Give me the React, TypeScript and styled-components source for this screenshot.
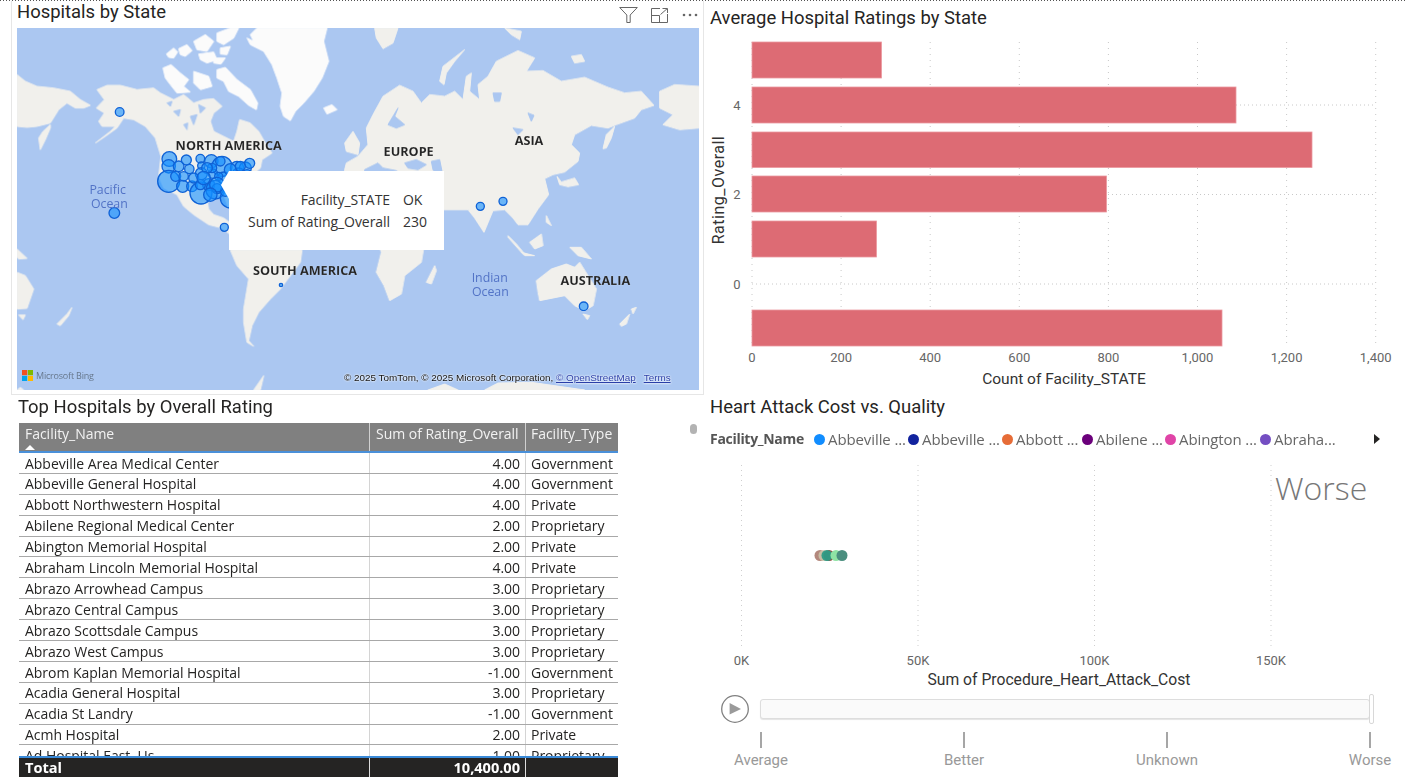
import React from "react";
import styled, { createGlobalStyle } from "styled-components";

const Global = createGlobalStyle`
  html, body { margin: 0; padding: 0; background: #fff; overflow: hidden; }
  * { box-sizing: border-box; }
`;

const DIN = `Roboto, "Liberation Sans", sans-serif`;
const SEGOE = `"Open Sans", "Noto Sans", sans-serif`;

const Page = styled.div`
  width: 1406px;
  height: 780px;
  display: grid;
  grid-template-columns: 704px 702px;
  grid-template-rows: 1px 394px 385px;
  overflow: hidden;
  font-family: ${SEGOE};
  color: #252423;
`;
const TopEdge = styled.div`
  grid-column: 1 / 3;
  background: repeating-linear-gradient(90deg, #555 0 1px, transparent 1px 3px);
`;
const MapVisual = styled.section`
  margin-left: 11px;
  border: 1px solid #e6e6e6;
  border-top: none;
  padding: 0 3px 0 5px;
  display: flex;
  flex-direction: column;
`;
const VisualHeader = styled.header`
  height: 27px;
  display: flex;
  align-items: center;
  justify-content: space-between;
`;
const Title = styled.h2`
  margin: 0;
  font: 400 18.45px/24px ${DIN};
  color: #252423;
  white-space: nowrap;
`;
const MapTitle = styled(Title)`
  margin-top: -5px;
`;
const HeaderIcons = styled.div`
  display: flex;
  align-items: center;
  gap: 14px;
  padding-right: 2px;
  margin-top: 1px;
  & > svg:first-child { margin-right: -1px; }
`;
const MapFrame = styled.div`
  position: relative;
  width: 682px;
  height: 362px;
  background: #abc7f1;
  overflow: hidden;
`;
const MapSvg = styled.svg`
  display: block;
  width: 682px;
  height: 362px;
`;
const LandGroup = styled.g`
  filter: blur(1.8px);
`;
const Tooltip = styled.div`
  position: absolute;
  left: 212px;
  top: 143px;
  width: 215px;
  height: 79px;
  background: #fff;
  padding: 18px 0 0 18px;
  display: grid;
  grid-template-columns: 143px auto;
  grid-auto-rows: 22px;
  column-gap: 13px;
  font: 400 14px/22px ${SEGOE};
  letter-spacing: -0.06px;
  color: #333;
  &::before {
    content: "";
    position: absolute;
    left: -8px;
    top: 0;
    border-style: solid;
    border-width: 14px 8px 14px 0;
    border-color: transparent #fff transparent transparent;
  }
`;
const TipKey = styled.span`
  text-align: right;
  white-space: nowrap;
`;
const TipValue = styled.span`
  white-space: nowrap;
`;
const BingMark = styled.div`
  position: absolute;
  left: 5px;
  bottom: 9px;
  display: flex;
  align-items: center;
  gap: 3px;
  font: 400 9px/11px ${SEGOE};
  letter-spacing: -0.2px;
  color: #66778c;
`;
const Attribution = styled.div`
  position: absolute;
  left: 327px;
  bottom: 6px;
  font: 400 9.9px/12px "Liberation Sans", sans-serif;
  color: #111;
  white-space: nowrap;
  text-shadow: 0 0 2px #fff, 0 0 2px #fff;
`;
const AttrLink = styled.span<{ $gap?: boolean }>`
  color: #2a3fa8;
  text-decoration: underline;
  margin-left: ${(p) => (p.$gap ? "8px" : "0")};
`;
const BarVisual = styled.section`
  padding: 5px 0 0 6px;
  display: flex;
  flex-direction: column;
`;
const ChartSvg = styled.svg`
  display: block;
  margin-left: -6px;
  flex: none;
`;
const ScatterSvg = styled(ChartSvg)`
  margin-top: 10px;
`;
const TableVisual = styled.section`
  position: relative;
  padding-left: 18px;
  padding-top: 1px;
`;
const TableTitle = styled(Title)`
  height: 27px;
  line-height: 23px;
`;
const ScrollDot = styled.div`
  position: absolute;
  left: 690px;
  top: 29px;
  width: 7px;
  height: 10px;
  border-radius: 4px;
  background: #b3b3b3;
`;
const Table = styled.div`
  width: 599px;
  margin-left: 1px;
  font: 400 14px/20px ${SEGOE};
  letter-spacing: -0.03px;
`;
const Columns = styled.div`
  display: grid;
  grid-template-columns: 351px 156px 92px;
`;
const HeadRow = styled(Columns)`
  height: 30px;
  background: #808080;
  color: #f2f2f2;
  border-bottom: 2px solid #4a90d9;
`;
const HeadCell = styled.div`
  position: relative;
  padding: 0 5px 0 6px;
  white-space: nowrap;
  line-height: 22px;
  border-right: 1px solid #d0d0d0;
  &:last-child { border-right: none; padding-left: 5px; }
`;
const SortArrow = styled.span`
  position: absolute;
  left: 6px;
  top: 22px;
  border-style: solid;
  border-width: 0 5px 5px 5px;
  border-color: transparent transparent #fff transparent;
`;
const Body = styled.div`
  height: 303px;
  overflow: hidden;
`;
const Row = styled(Columns)`
  height: 20.9px;
  border-bottom: 1px solid #a8a8a8;
`;
const Cell = styled.div<{ $num?: boolean }>`
  padding: 0.6px 5px 0 6px;
  white-space: nowrap;
  overflow: hidden;
  text-align: ${(p) => (p.$num ? "right" : "left")};
  line-height: 20px;
  border-right: 1px solid #d4d4d4;
  &:last-child { border-right: none; padding-left: 5px; }
`;
const TotalRow = styled(Columns)`
  height: 21px;
  background: #252423;
  color: #fff;
  font-weight: 700;
  font-size: 14.6px;
  border-top: 2px solid #3a8ad8;
`;
const TotalCell = styled(Cell)`
  padding-top: 0;
  border-right-color: #ddd;
  line-height: 19px;
`;
const ScatterVisual = styled.section`
  padding: 0 0 0 6px;
  display: flex;
  flex-direction: column;
`;
const ScatterTitle = styled(Title)`
  height: 24px;
`;
const Legend = styled.div`
  height: 22px;
  margin-top: 9px;
  display: flex;
  align-items: center;
  position: relative;
  font: 400 15px/22px ${SEGOE};
  letter-spacing: -0.1px;
  color: #666;
`;
const LegendName = styled.span`
  width: 104px;
  font-size: 14px;
  letter-spacing: -0.3px;
  font-weight: 700;
  color: #555;
  white-space: nowrap;
`;
const LegendItem = styled.span<{ $width: number }>`
  width: ${(p) => p.$width}px;
  display: flex;
  align-items: center;
  gap: 3px;
  white-space: nowrap;
`;
const LegendDot = styled.i<{ $color: string }>`
  width: 11px;
  height: 11px;
  border-radius: 50%;
  background: ${(p) => p.$color};
  flex: none;
`;
const LegendNext = styled.span`
  position: absolute;
  left: 664px;
  top: 6px;
  border-style: solid;
  border-width: 5px 0 5px 6px;
  border-color: transparent transparent transparent #252423;
`;
const PlayRow = styled.div`
  display: flex;
  align-items: center;
  margin-left: 11px;
  height: 38px;
`;
const Track = styled.div`
  position: relative;
  width: 610px;
  height: 20px;
  margin-left: 11px;
  background: #fafafa;
  border: 1px solid #ddd;
  border-radius: 3px;
  box-shadow: 0 1px 1px #e4e4e4;
`;
const Thumb = styled.div`
  position: absolute;
  right: -5px;
  top: -6px;
  width: 5px;
  height: 30px;
  background: #fff;
  border: 1px solid #d8d8d8;
  border-radius: 2px;
`;
const Ticks = styled.div`
  width: 611px;
  margin: 4px 0 0 50px;
  display: flex;
  justify-content: space-between;
`;
const Tick = styled.div`
  width: 2px;
  display: flex;
  flex-direction: column;
  align-items: center;
  font: 400 15px/20px ${DIN};
  color: #999;
  white-space: nowrap;
`;
const TickMark = styled.span`
  width: 2px;
  height: 16px;
  margin-bottom: 2px;
  background: #a6a6a6;
  flex: none;
`;

const land1 = [
  "0,140 25,160 60,175 110,180 160,190 190,215 220,232 200,240 175,240 150,225 125,245 100,285 60,295 30,298 0,295",
  "100,290 78,310 65,330 70,365 85,335 100,300",
  "240,185 270,172 310,172 360,185 410,180 430,195 470,215 500,200 530,225 560,215 590,212 615,235 590,255 580,280 590,310 620,325 650,340 660,310 668,275 700,285 725,310 745,345 765,375 735,395 730,420 700,445 670,470 640,490 635,540 620,500 590,500 570,515 575,543 590,560 620,570 640,585 640,620 615,600 575,590 530,560 500,535 480,500 440,480 425,445 432,385 415,330 385,295 350,275 320,270 300,300 265,325 235,345 280,310 295,295 255,295 245,280 262,255 238,240 262,215",
];
const water1 = [
  "470,250 490,245 485,265",
  "520,265 540,260 530,290",
  "545,230 565,240 550,255",
  "500,290 512,285 510,305",
  "450,225 465,220 460,235",
  "640,300 655,295 650,310",
];
const arctic1 = [
  "448,78 470,60 482,72 470,90 455,88",
  "485,62 510,50 525,68 505,85 490,80",
  "530,40 565,20 590,40 570,70 540,65",
  "545,78 590,72 600,95 570,105 550,95",
  "600,15 640,0 665,0 650,30 620,50 600,40",
  "610,60 640,55 630,80 610,78",
  "590,90 625,90 612,108 590,105",
  "438,120 462,110 490,135 515,155 500,175 520,192 480,195 460,170 445,150",
  "530,130 575,145 585,175 550,185 530,165",
  "600,125 625,118 660,155 700,185 722,225 718,245 695,232 665,205 635,190 620,160 600,150",
  "690,30 710,40 700,20 720,0 930,0 920,40 935,100 915,150 890,190 860,225 835,250 820,278 800,265 790,235 795,195 780,150 765,110 740,70 700,50",
  "920,240 945,230 960,245 930,258",
];
const land2 = [
  "-40,425 -35,405 0,385 30,350 25,300 45,260 75,205 125,172 165,190 190,225 215,200 260,205 290,190 315,215 325,145 340,135 335,190 365,215 360,170 390,145 415,100 480,68 530,90 505,130 555,128 610,160 680,148 750,178 800,195 850,190 888,232 850,245 830,270 775,290 750,300 700,292 650,320 640,350 665,375 660,400 620,432 585,440 560,452 572,500 540,543 510,590 480,590 465,570 440,545 405,548 378,613 350,570 330,545 258,545 150,500 100,460 -40,430",
  "-40,345 -15,310 5,345 0,380 -35,370",
  "735,362 745,320 770,295 760,330 745,360",
  "650,450 662,470 630,476 605,470 597,445 610,462",
  "245,160 255,115 320,65 290,100 265,135 258,170",
  "50,0 120,0 105,45 75,62 55,30",
  "440,0 490,10 485,35 460,20",
  "640,85 670,80 680,100 650,105",
  "905,190 950,170 1023,175 1023,300 965,305 915,290 945,260 905,240",
];
const water2 = [
  "20,425 60,405 75,420 115,428 130,440 20,440",
  "140,405 175,395 205,410 180,425 150,420",
  "220,400 245,395 252,430 235,438 225,425",
  "90,290 120,240 110,265 140,290 115,300",
  "510,255 528,262 520,280",
  "465,300 495,305 480,320",
  "405,195 430,195 425,220 410,220",
];
const land3 = [
  "645,123 855,123 850,160 820,200 790,240 760,270 725,310 705,350 695,395 710,412 690,400 680,340 680,300 695,210 660,170 640,123",
  "0,190 25,200 50,240 30,298 0,300",
  "0,120 30,148 5,150 0,145",
  "5,318 25,318 18,332",
  "120,345 150,315 165,295 155,320 130,350",
  "710,543 740,500 730,543",
  "0,543 10,535 20,543",
];
const land4 = [
  "60,100 200,100 190,160 140,200 130,255 95,275 78,230 55,190 70,130",
  "205,220 230,170 235,185 220,225",
  "450,80 475,105 500,135 490,130 450,85",
  "490,130 530,140 500,140",
  "515,100 550,75 555,110 530,120",
  "565,20 580,50 565,40",
  "635,115 670,115 700,150 660,140",
  "535,215 580,180 625,165 650,175 665,160 715,240 705,290 680,305 650,290 620,260 545,275 540,250",
  "675,315 695,320 688,332",
  "785,345 815,315 805,345 790,352",
  "820,300 835,295 825,315",
  "210,543 260,525 300,543",
  "380,543 420,522 520,520 680,543",
];

const bubbles: [number, number, number][] = [
  [457, 393, 22], [455, 415, 20], [508, 396, 15], [550, 392, 13], [583, 400, 20],
  [615, 415, 30], [485, 415, 16], [517, 423, 14], [553, 413, 11], [455, 460, 33],
  [476, 445, 15], [497, 475, 18], [525, 475, 16], [500, 445, 14], [553, 437, 18],
  [588, 437, 14], [552, 495, 33], [575, 470, 18], [595, 485, 28], [600, 482, 15],
  [640, 510, 30], [660, 420, 20], [685, 420, 18], [698, 406, 15], [620, 450, 18],
  [625, 490, 15], [665, 440, 20], [690, 440, 15], [550, 470, 15], [640, 425, 18],
  [670, 415, 15], [605, 445, 12], [585, 420, 14], [600, 470, 22], [570, 420, 16],
  [530, 450, 15], [610, 400, 14], [650, 470, 20], [580, 500, 20], [560, 450, 20],
  [308, 252, 13], [292, 555, 16], [622, 598, 12], [792, 771, 5],
  [1390, 535, 12], [1458, 520, 12], [1700, 835, 13],
];

const mapLabels: [string, number, number][] = [
  ["NORTH AMERICA", 635, 365],
  ["EUROPE", 1175, 384],
  ["ASIA", 1536, 350],
  ["SOUTH AMERICA", 864, 742],
  ["AUSTRALIA", 1735, 771],
];
const oceanLabels: [string, number, number][] = [
  ["Pacific", 272, 499],
  ["Ocean", 277, 539],
  ["Indian", 1418, 763],
  ["Ocean", 1420, 805],
];

const Polys = ({ list, fill }: { list: string[]; fill: string }) => (
  <>
    {list.map((p, i) => (
      <polygon key={i} points={p} fill={fill} stroke={fill} strokeWidth={3} strokeLinejoin="round" />
    ))}
  </>
);

const WorldMap = () => (
  <MapSvg viewBox="0 0 2046 1086">
    <LandGroup>
      <Polys list={land1} fill="#f1f0ec" />
      <Polys list={water1} fill="#abc7f1" />
      <Polys list={arctic1} fill="#fbfbfb" />
      <g transform="translate(1023,0)">
        <Polys list={land2} fill="#f1f0ec" />
        <Polys list={water2} fill="#abc7f1" />
      </g>
      <g transform="translate(0,543)">
        <Polys list={land3} fill="#f1f0ec" />
      </g>
      <g transform="translate(1023,543)">
        <Polys list={land4} fill="#f1f0ec" />
      </g>
    </LandGroup>
    {bubbles.map(([x, y, r], i) => (
      <circle key={i} cx={x} cy={y} r={r} fill="#118dff" fillOpacity={0.6} stroke="#0f62d6" strokeWidth={4} />
    ))}
    {mapLabels.map(([t, x, y]) => (
      <text key={t} x={x} y={y} textAnchor="middle" fontFamily={SEGOE} fontWeight={700} fontSize={38} fill="#222" stroke="#fff" strokeOpacity={0.25} strokeWidth={1}>
        {t}
      </text>
    ))}
    {oceanLabels.map(([t, x, y]) => (
      <text key={t + x} x={x} y={y} textAnchor="middle" fontFamily={SEGOE} fontSize={37} fill="#5273c6">
        {t}
      </text>
    ))}
  </MapSvg>
);

const FilterIcon = () => (
  <svg width="19" height="16" viewBox="0 0 19 16" fill="none" stroke="#666" strokeWidth="1">
    <path d="M0.7 0.5 H18.3 L11.2 8 V15.5 H7.8 V8 Z" />
  </svg>
);
const FocusIcon = () => (
  <svg width="17" height="15" viewBox="0 0 17 15" fill="none" stroke="#666" strokeWidth="1">
    <path d="M9 0.5 H0.5 V14.5 H16.5 V6" />
    <path d="M0.5 7.5 H8.5 V14.5" />
    <path d="M9.5 6.5 L16 0.8 M11.5 0.5 H16.5 V5" />
  </svg>
);
const MoreIcon = () => (
  <svg width="16" height="4" viewBox="0 0 16 4" fill="#666">
    <circle cx="2" cy="2" r="1.3" />
    <circle cx="8" cy="2" r="1.3" />
    <circle cx="14" cy="2" r="1.3" />
  </svg>
);
const BingLogo = () => (
  <svg width="11" height="11" viewBox="0 0 11 11">
    <rect width="5.2" height="5.2" fill="#f25022" />
    <rect x="5.8" width="5.2" height="5.2" fill="#7fba00" />
    <rect y="5.8" width="5.2" height="5.2" fill="#00a4ef" />
    <rect x="5.8" y="5.8" width="5.2" height="5.2" fill="#ffb900" />
  </svg>
);

const barData: [number, number, number][] = [
  [42, 78, 881.5],
  [87, 123, 1236],
  [132, 167.5, 1312],
  [176, 212, 1106.5],
  [221, 257, 876.5],
  [310, 346, 1222],
];
const xTicks = ["0", "200", "400", "600", "800", "1,000", "1,200", "1,400"];

const BarChart = () => (
  <ChartSvg width="702" height="365" viewBox="704 30 702 365">
    {xTicks.map((t, i) => {
      const x = 752 + i * 89.1;
      return <line key={t} x1={x} x2={x} y1={42} y2={347} stroke="#c8c8c8" strokeWidth={1} strokeDasharray="1 5" />;
    })}
    {[105, 194.5, 284].map((y) => (
      <line key={y} x1={752} x2={1376} y1={y} y2={y} stroke="#c8c8c8" strokeWidth={1} strokeDasharray="1 3" />
    ))}
    {barData.map(([a, b, x]) => (
      <rect key={a} x={752} y={a} width={x - 752} height={b - a} fill="#dd6b74" stroke="#ec9aa0" strokeWidth={0.8} />
    ))}
    <g fontFamily={DIN} fontSize={13} fill="#666" textAnchor="middle">
      {xTicks.map((t, i) => (
        <text key={t} x={752 + i * 89.1} y={362}>{t}</text>
      ))}
      <text x={737} y={110}>4</text>
      <text x={737} y={199}>2</text>
      <text x={737} y={289}>0</text>
    </g>
    <text x={1064} y={384} textAnchor="middle" fontFamily={DIN} fontSize={15.5} fill="#333">
      Count of Facility_STATE
    </text>
    <text transform="translate(724,190) rotate(-90)" textAnchor="middle" fontFamily={DIN} fontSize={16} letterSpacing={0.5} fill="#333">
      Rating_Overall
    </text>
  </ChartSvg>
);

const scatterX: [string, number][] = [["0K", 741.5], ["50K", 918], ["100K", 1094.5], ["150K", 1271]];
const scatterDots: [number, string, number][] = [
  [820, "#a06a5c", 0.8],
  [824, "#c9c3a8", 0.9],
  [829, "#8c3a2c", 0.9],
  [827, "#2c9c86", 0.95],
  [836, "#8fe3a4", 1],
  [842, "#4b8f7f", 1],
];

const ScatterChart = () => (
  <ScatterSvg width="702" height="230" viewBox="704 460 702 230">
    {scatterX.map(([t, x]) => (
      <line key={t} x1={x} x2={x} y1={465} y2={648} stroke="#cfcfcf" strokeWidth={1} strokeDasharray="1 4" />
    ))}
    {scatterDots.map(([x, c, o], i) => (
      <circle key={i} cx={x} cy={555.5} r={5.5} fill={c} fillOpacity={o} />
    ))}
    <text x={1275} y={500} fontFamily={SEGOE} fontWeight={300} fontSize={32} fill="#777">Worse</text>
    <g fontFamily={DIN} fontSize={13} fill="#666" textAnchor="middle">
      {scatterX.map(([t, x]) => (
        <text key={t} x={x} y={665}>{t}</text>
      ))}
    </g>
    <text x={1059} y={685} textAnchor="middle" fontFamily={DIN} fontSize={15.7} fill="#333">
      Sum of Procedure_Heart_Attack_Cost
    </text>
  </ScatterSvg>
);

const PlayButton = () => (
  <svg width="28" height="30" viewBox="0 0 28 30" fill="none">
    <circle cx="14" cy="15" r="13.3" stroke="#808080" strokeWidth="1.3" />
    <path d="M8.6 9 L20 15 L8.6 20.5 Z" fill="#9a9a9a" />
  </svg>
);

const rows: [string, string, string][] = [
  ["Abbeville Area Medical Center", "4.00", "Government"],
  ["Abbeville General Hospital", "4.00", "Government"],
  ["Abbott Northwestern Hospital", "4.00", "Private"],
  ["Abilene Regional Medical Center", "2.00", "Proprietary"],
  ["Abington Memorial Hospital", "2.00", "Private"],
  ["Abraham Lincoln Memorial Hospital", "4.00", "Private"],
  ["Abrazo Arrowhead Campus", "3.00", "Proprietary"],
  ["Abrazo Central Campus", "3.00", "Proprietary"],
  ["Abrazo Scottsdale Campus", "3.00", "Proprietary"],
  ["Abrazo West Campus", "3.00", "Proprietary"],
  ["Abrom Kaplan Memorial Hospital", "-1.00", "Government"],
  ["Acadia General Hospital", "3.00", "Proprietary"],
  ["Acadia St Landry", "-1.00", "Government"],
  ["Acmh Hospital", "2.00", "Private"],
  ["Ad Hospital East, Us", "1.00", "Proprietary"],
];

const legend: [string, string, number][] = [
  ["#118dff", "Abbeville ...", 94],
  ["#12239e", "Abbeville ...", 94],
  ["#e66c37", "Abbott ...", 80],
  ["#6b007b", "Abilene ...", 83],
  ["#e044a7", "Abington ...", 95],
  ["#744ec2", "Abraha...", 80],
];

export default function App() {
  return (
    <Page>
      <Global />
      <TopEdge />
      <MapVisual>
        <VisualHeader>
          <MapTitle>Hospitals by State</MapTitle>
          <HeaderIcons>
            <FilterIcon />
            <FocusIcon />
            <MoreIcon />
          </HeaderIcons>
        </VisualHeader>
        <MapFrame>
          <WorldMap />
          <Tooltip>
            <TipKey>Facility_STATE</TipKey>
            <TipValue>OK</TipValue>
            <TipKey>Sum of Rating_Overall</TipKey>
            <TipValue>230</TipValue>
          </Tooltip>
          <BingMark>
            <BingLogo />
            Microsoft Bing
          </BingMark>
          <Attribution>
            © 2025 TomTom, © 2025 Microsoft Corporation, <AttrLink>© OpenStreetMap</AttrLink>
            <AttrLink $gap>Terms</AttrLink>
          </Attribution>
        </MapFrame>
      </MapVisual>
      <BarVisual>
        <Title>Average Hospital Ratings by State</Title>
        <BarChart />
      </BarVisual>
      <TableVisual>
        <TableTitle>Top Hospitals by Overall Rating</TableTitle>
        <ScrollDot />
        <Table>
          <HeadRow>
            <HeadCell>
              Facility_Name
              <SortArrow />
            </HeadCell>
            <HeadCell>Sum of Rating_Overall</HeadCell>
            <HeadCell>Facility_Type</HeadCell>
          </HeadRow>
          <Body>
            {rows.map(([n, v, t]) => (
              <Row key={n}>
                <Cell>{n}</Cell>
                <Cell $num>{v}</Cell>
                <Cell>{t}</Cell>
              </Row>
            ))}
          </Body>
          <TotalRow>
            <TotalCell>Total</TotalCell>
            <TotalCell $num>10,400.00</TotalCell>
            <TotalCell />
          </TotalRow>
        </Table>
      </TableVisual>
      <ScatterVisual>
        <ScatterTitle>Heart Attack Cost vs. Quality</ScatterTitle>
        <Legend>
          <LegendName>Facility_Name</LegendName>
          {legend.map(([c, t, w]) => (
            <LegendItem key={c} $width={w}>
              <LegendDot $color={c} />
              {t}
            </LegendItem>
          ))}
          <LegendNext />
        </Legend>
        <ScatterChart />
        <PlayRow>
          <PlayButton />
          <Track>
            <Thumb />
          </Track>
        </PlayRow>
        <Ticks>
          {["Average", "Better", "Unknown", "Worse"].map((t) => (
            <Tick key={t}>
              <TickMark />
              {t}
            </Tick>
          ))}
        </Ticks>
      </ScatterVisual>
    </Page>
  );
}
